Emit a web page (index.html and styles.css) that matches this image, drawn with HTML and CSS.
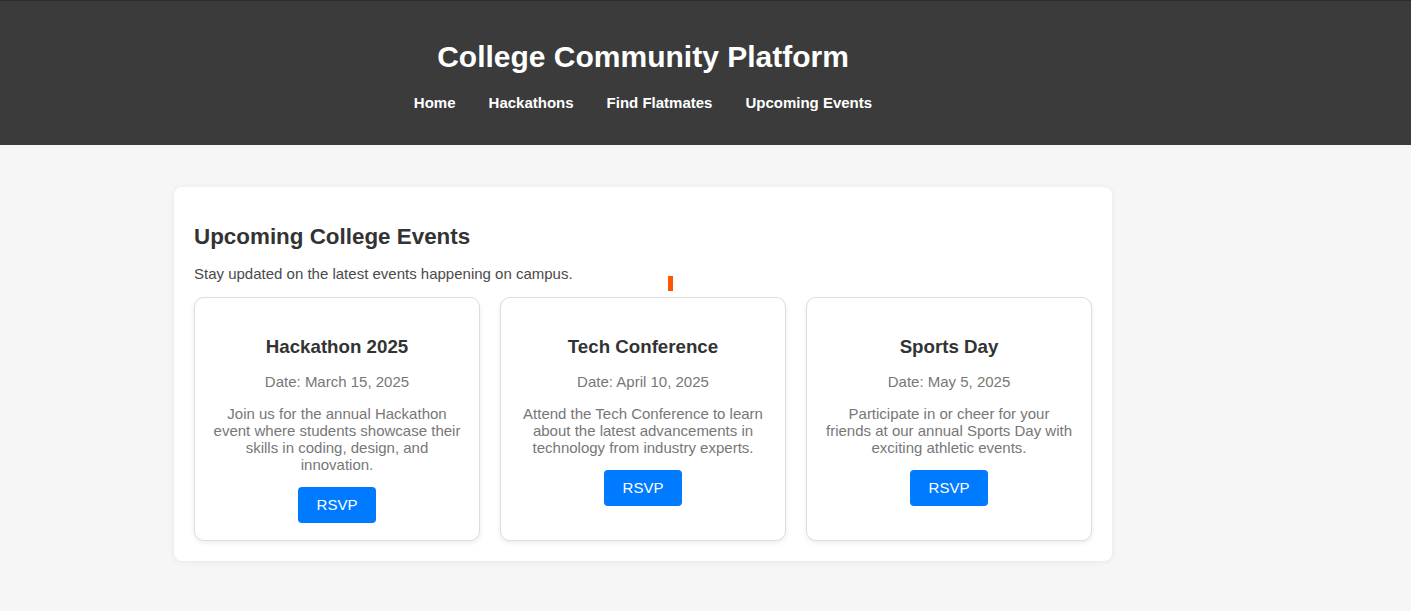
FILE: index.html
```html
<!DOCTYPE html>
<html lang="en">
<head>
<meta charset="utf-8">
<title>College Community Platform</title>
<link rel="stylesheet" href="styles.css">
</head>
<body>
<header class="site-header">
  <div class="frame">
    <h1 class="site-title">College Community Platform</h1>
    <nav class="site-nav">
      <a href="#">Home</a>
      <a href="#">Hackathons</a>
      <a href="#">Find Flatmates</a>
      <a href="#">Upcoming Events</a>
    </nav>
  </div>
</header>
<main class="site-main">
  <div class="frame">
    <section class="panel">
      <span class="marker"></span>
      <h2 class="panel-title">Upcoming College Events</h2>
      <p class="panel-sub">Stay updated on the latest events happening on campus.</p>
      <div class="events">
        <article class="event">
          <h3 class="event-title">Hackathon 2025</h3>
          <p class="event-date">Date: March 15, 2025</p>
          <p class="event-desc">Join us for the annual Hackathon event where students showcase their skills in coding, design, and innovation.</p>
          <button class="rsvp">RSVP</button>
        </article>
        <article class="event">
          <h3 class="event-title">Tech Conference</h3>
          <p class="event-date">Date: April 10, 2025</p>
          <p class="event-desc">Attend the Tech Conference to learn about the latest advancements in technology from industry experts.</p>
          <button class="rsvp">RSVP</button>
        </article>
        <article class="event">
          <h3 class="event-title">Sports Day</h3>
          <p class="event-date">Date: May 5, 2025</p>
          <p class="event-desc">Participate in or cheer for your friends at our annual Sports Day with exciting athletic events.</p>
          <button class="rsvp">RSVP</button>
        </article>
      </div>
    </section>
  </div>
</main>
</body>
</html>
```
FILE: styles.css
```css
* { box-sizing: border-box; }
html, body { margin: 0; padding: 0; }
body {
  font-family: "Liberation Sans", Arial, sans-serif;
  background: #f6f6f6;
  color: #333;
}
.frame {
  width: 1286px;
}
.site-header {
  background: #3b3b3b;
  border-top: 1px solid #2c2c2c;
  height: 145px;
  padding-top: 39px;
}
.site-title {
  margin: 0 0 20px;
  color: #fff;
  font-size: 30px;
  font-weight: bold;
  text-align: center;
}
.site-nav {
  display: flex;
  justify-content: center;
  gap: 33px;
}
.site-nav a {
  color: #fff;
  font-size: 15px;
  font-weight: bold;
  text-decoration: none;
}
.site-main {
  padding: 42px 0 50px;
}
.panel {
  position: relative;
  width: 938px;
  margin: 0 auto;
  background: #fff;
  border-radius: 8px;
  box-shadow: 0 1px 6px rgba(0,0,0,0.07);
  padding: 20px;
}
.marker {
  position: absolute;
  left: 494px;
  top: 89px;
  width: 5px;
  height: 15px;
  background: #ff5500;
}
.panel-title {
  margin: 17px 0 15px;
  font-size: 22.4px;
  font-weight: bold;
  color: #333;
}
.panel-sub {
  margin: 0 0 14.5px;
  font-size: 15px;
  color: #4a4a4a;
}
.events {
  display: grid;
  grid-template-columns: repeat(3, 1fr);
  gap: 20px;
}
.event {
  background: #fff;
  border: 1px solid #ddd;
  border-radius: 10px;
  box-shadow: 0 2px 5px rgba(0,0,0,0.08);
  padding: 20px 18px 17px;
  text-align: center;
}
.event-title {
  margin: 18px 0 15px;
  font-size: 18.72px;
  font-weight: bold;
  color: #333;
}
.event-date {
  margin: 0;
  font-size: 15px;
  color: #777;
}
.event-desc {
  margin: 15px 0 14.5px;
  font-size: 15px;
  color: #777;
}
.rsvp {
  display: inline-block;
  background: #007bff;
  color: #fff;
  border: none;
  border-radius: 4px;
  font-family: "Liberation Sans", Arial, sans-serif;
  font-size: 15px;
  line-height: 18px;
  padding: 9px 18.5px;
  cursor: pointer;
}
```
